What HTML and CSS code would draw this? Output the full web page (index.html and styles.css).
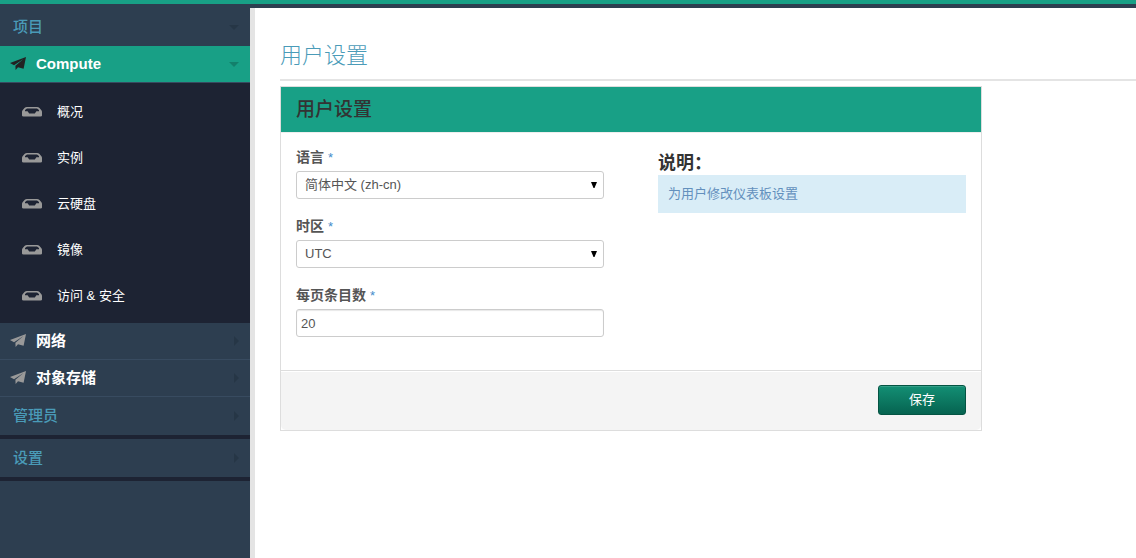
FILE: index.html
```html
<!DOCTYPE html>
<html lang="zh-CN">
<head>
<meta charset="utf-8">
<title>用户设置</title>
<link rel="stylesheet" href="styles.css">
</head>
<body>
<svg class="sprite" aria-hidden="true">
  <symbol id="plane" viewBox="0 0 16 13"><path d="M16 0 0 6l4 2.200L13.500 2 5.400 8.800 5.600 13l2.400-2.800 5.600 1.600z"/></symbol>
  <symbol id="tray" viewBox="0 0 20 10"><path fill-rule="evenodd" d="M5 0h10q1.500 0 2.500 1L19.400 3.200Q20 4 20 5v3.500Q20 9.500 18.500 9.500h-17Q0 9.500 0 8.500V5Q0 4 .6 3.200L2.500 1Q3.500 0 5 0zM5 1.500 3 3v1.200h2.600L7.200 6.500h5.600L14.400 4.200H17V3L15 1.500z"/></symbol>
  <symbol id="down" viewBox="0 0 10 5"><path d="M0 0h10L5 5z"/></symbol>
  <symbol id="right" viewBox="0 0 5 10"><path d="M0 0v10l5-5z"/></symbol>
</svg>
<div class="layout">
  <nav class="sidebar">
    <a class="section" href="#">项目<svg class="caret down"><use href="#down"/></svg></a>
    <a class="group active" href="#"><svg class="plane"><use href="#plane"/></svg>Compute<svg class="caret down"><use href="#down"/></svg></a>
    <ul class="items">
      <li><a href="#"><svg class="tray"><use href="#tray"/></svg>概况</a></li>
      <li><a href="#"><svg class="tray"><use href="#tray"/></svg>实例</a></li>
      <li><a href="#"><svg class="tray"><use href="#tray"/></svg>云硬盘</a></li>
      <li><a href="#"><svg class="tray"><use href="#tray"/></svg>镜像</a></li>
      <li><a href="#"><svg class="tray"><use href="#tray"/></svg>访问 &amp; 安全</a></li>
    </ul>
    <a class="group" href="#"><svg class="plane"><use href="#plane"/></svg>网络<svg class="caret right"><use href="#right"/></svg></a>
    <a class="group" href="#"><svg class="plane"><use href="#plane"/></svg>对象存储<svg class="caret right"><use href="#right"/></svg></a>
    <a class="section divided" href="#">管理员<svg class="caret right"><use href="#right"/></svg></a>
    <a class="section divided" href="#">设置<svg class="caret right"><use href="#right"/></svg></a>
  </nav>
  <main class="content">
    <h1 class="page-title">用户设置</h1>
    <form class="panel">
      <h2 class="panel-head">用户设置</h2>
      <div class="panel-body">
        <div class="fields">
          <div class="field">
            <label for="language">语言 <span class="required">*</span></label>
            <div class="select"><select id="language"><option>简体中文 (zh-cn)</option></select><svg class="arrow" viewBox="0 0 6 6"><path d="M0 0h6L3.500 6h-1z"/></svg></div>
          </div>
          <div class="field">
            <label for="timezone">时区 <span class="required">*</span></label>
            <div class="select"><select id="timezone"><option>UTC</option></select><svg class="arrow" viewBox="0 0 6 6"><path d="M0 0h6L3.500 6h-1z"/></svg></div>
          </div>
          <div class="field">
            <label for="pagesize">每页条目数 <span class="required">*</span></label>
            <input id="pagesize" type="text" value="20">
          </div>
        </div>
        <div class="help">
          <h3>说明：</h3>
          <p>为用户修改仪表板设置</p>
        </div>
      </div>
      <div class="panel-foot"><button type="submit">保存</button></div>
    </form>
  </main>
</div>
</body>
</html>
```
FILE: styles.css
```css
* { box-sizing: border-box; }
body {
  margin: 0;
  min-height: 100vh;
  display: flex;
  flex-direction: column;
  border-top: 4px solid #18a086;
  background: #fff;
  color: #555;
  font: 13px/20px "Liberation Sans", "Noto Sans CJK SC", sans-serif;
}
a { color: inherit; text-decoration: none; }
.sprite { display: none; }
.layout {
  flex: 1;
  display: flex;
  border-top: 4px solid #2d3e50;
}
.sidebar {
  flex: 0 0 255px;
  border-right: 5px solid #e4e4e4;
  background: #2d3e50;
}
.section, .group {
  display: flex;
  align-items: center;
  padding-right: 11px;
  font-size: 15px;
  font-weight: bold;
}
.section { height: 38px; padding-left: 13px; color: #4a9bb8; font-weight: 500; }
.divided { height: 42px; border-bottom: 4px solid #1d2333; }
.group {
  height: 37px;
  padding-left: 10px;
  border-bottom: 1px solid #384b60;
  color: #fff;
}
.active { background: #18a086; }
.plane { width: 16px; height: 13px; margin: 0 10px 1px 0; fill: #999; }
.active .plane { fill: #222; }
.caret { margin-left: auto; fill: #263646; }
.active .caret { fill: #13806b; }
.down { width: 10px; height: 5px; }
.right { width: 5px; height: 10px; }
.items {
  margin: 0;
  padding: 6px 0 4px;
  list-style: none;
  background: #1d2333;
  color: #fff;
}
.items a {
  height: 46px;
  display: flex;
  align-items: center;
  padding-left: 22px;
}
.tray { width: 20px; height: 10px; margin-right: 15px; fill: #999; }
.content { flex: 1; min-width: 0; padding: 33px 0 32px 25px; }
.page-title {
  margin: 0 0 5px;
  padding-bottom: 8px;
  border-bottom: 2px solid #e4e4e4;
  color: #4a9bb8;
  font-size: 22px;
  line-height: 30px;
  font-weight: 300;
}
.panel { max-width: 702px; border: 1px solid #ddd; }
.panel-head {
  margin: 0;
  padding: 0 15px;
  background: #18a086;
  color: #333;
  font-size: 19px;
  line-height: 45px;
  font-weight: 500;
}
.panel-body {
  display: grid;
  grid-template-columns: 1fr 1fr;
  gap: 54px;
  padding: 15px;
  border-top: 1px solid #eee;
}
.field { margin-bottom: 18px; }
.field label { display: block; margin-bottom: 4px; line-height: 18px; font-size: 14px; font-weight: bold; }
.required { color: #428bca; font-size: 13px; font-weight: normal; }
.select { position: relative; }
.select select, .field input {
  display: block;
  width: 100%;
  height: 28px;
  margin: 0;
  border: 1px solid #ccc;
  border-radius: 3px;
  background: #fff;
  color: #555;
  font: inherit;
}
.select select { appearance: none; padding: 0 24px 0 8px; }
.field input { padding: 0 4px; box-shadow: inset 0 1px 1px #e8e8e8; }
.arrow { position: absolute; right: 7px; top: 11px; width: 6px; height: 6px; fill: #000; pointer-events: none; }
.help h3 { margin: 0; padding-top: 4px; color: #333; font-size: 18px; line-height: 23px; font-weight: bold; }
.help p { margin: 0; padding: 9px 10px; background: #d9edf7; color: #6390bd; }
.panel-foot {
  display: flex;
  justify-content: flex-end;
  padding: 14px 15px 15px;
  border-top: 1px solid #ddd;
  border-radius: 0 0 5px 5px;
  background: #f4f4f4;
  box-shadow: inset 0 1px 0 #fff;
}
.panel-foot button {
  width: 88px;
  height: 30px;
  padding: 0;
  border: 1px solid #045443;
  border-radius: 3px;
  background: linear-gradient(#138f74, #066350);
  box-shadow: inset 0 1px 0 #359f88;
  color: #fff;
  font: inherit;
}
```
